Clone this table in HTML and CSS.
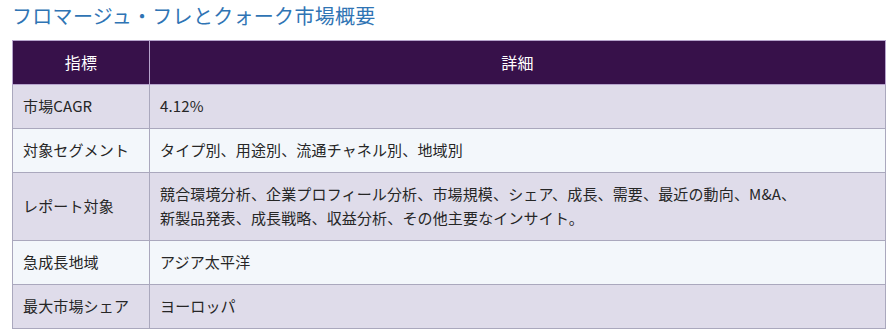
FILE: index.html
```html
<!DOCTYPE html>
<html lang="ja">
<head>
<meta charset="utf-8">
<link rel="stylesheet" href="styles.css">
</head>
<body>
<h2 class="title">フロマージュ・フレとクォーク市場概要</h2>
<table class="summary">
  <thead>
    <tr><th class="col-key">指標</th><th>詳細</th></tr>
  </thead>
  <tbody>
    <tr class="odd"><td>市場CAGR</td><td>4.12%</td></tr>
    <tr class="even"><td>対象セグメント</td><td>タイプ別、用途別、流通チャネル別、地域別</td></tr>
    <tr class="odd"><td>レポート対象</td><td>競合環境分析、企業プロフィール分析、市場規模、シェア、成長、需要、最近の動向、M&amp;A、<br>新製品発表、成長戦略、収益分析、その他主要なインサイト。</td></tr>
    <tr class="even"><td>急成長地域</td><td>アジア太平洋</td></tr>
    <tr class="odd"><td>最大市場シェア</td><td>ヨーロッパ</td></tr>
  </tbody>
</table>
</body>
</html>
```
FILE: styles.css
```css
body {
  margin: 0;
  padding: 0 8px 0 12px;
  background: #ffffff;
  font-family: "Noto Sans CJK JP", "Noto Sans", sans-serif;
  color: #262626;
}
.title {
  margin: 1px 0 10px 0;
  font-size: 20px;
  line-height: 29px;
  font-weight: 400;
  letter-spacing: 0.3px;
  color: #2f74b4;
}
.summary {
  width: 100%;
  border-collapse: collapse;
  font-size: 15px;
  line-height: 24px;
  letter-spacing: 0.15px;
}
.summary th {
  background: #37114a;
  color: #ffffff;
  font-weight: 400;
  font-size: 16px;
  text-align: center;
  height: 24px;
  padding: 9px 10px 10px;
  border: 1px solid #b6a4cc;
}
.summary td {
  padding: 9px 10px 10px;
  border: 1px solid #aaa8bd;
  text-align: left;
  vertical-align: middle;
}
.summary .col-key {
  width: 116px;
}
.summary tr.odd td {
  background: #dfdcea;
}
.summary tr.even td {
  background: #f3f7fb;
}
```
